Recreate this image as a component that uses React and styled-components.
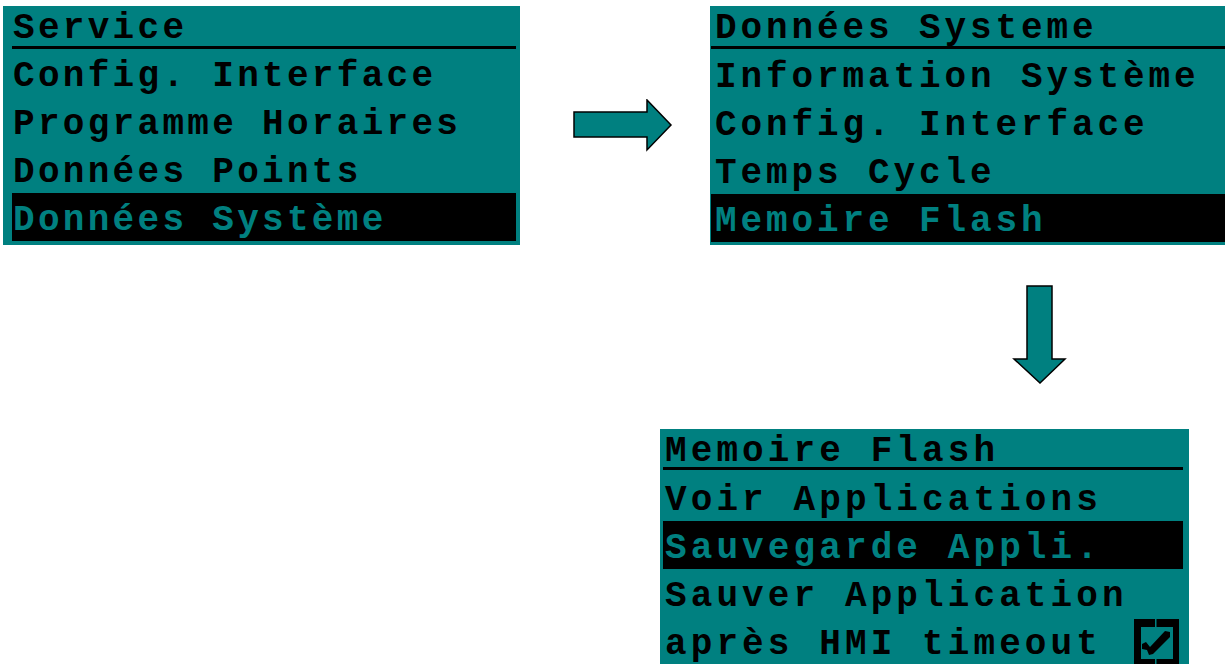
import React from 'react';
import styled, { createGlobalStyle } from 'styled-components';

const TEAL = '#008080';

const GlobalStyle = createGlobalStyle`
  html, body {
    margin: 0;
    padding: 0;
    background: #ffffff;
    overflow: hidden;
  }
`

const Canvas = styled.div`
  width: 1225px;
  height: 664px;
  display: flex;
  flex-direction: column;
  overflow: hidden;
`

const TopRow = styled.div`
  display: flex;
  flex-direction: row;
  align-items: center;
  margin-top: 6px;
  padding-left: 3px;
  & > * {
    flex-shrink: 0;
  }
`

const ArrowRightSvg = styled.svg`
  margin-left: 53px;
  margin-right: 37px;
`

const DownRow = styled.div`
  display: flex;
  padding-left: 1012px;
  margin-top: 40px;
`

const BottomRow = styled.div`
  display: flex;
  padding-left: 660px;
  margin-top: 44px;
  & > * {
    flex-shrink: 0;
  }
`

const Panel = styled.div`
  width: ${p => p.$w}px;
  height: ${p => p.$h}px;
  box-sizing: border-box;
  background: ${TEAL};
  padding: 0 ${p => p.$pr}px 0 ${p => p.$pl}px;
  display: flex;
  flex-direction: column;
  font-family: "Liberation Mono", "DejaVu Sans Mono", monospace;
  font-weight: bold;
  font-size: 36px;
  letter-spacing: ${p => p.$ls}px;
  color: #000;
  white-space: pre;
`

const Header = styled.div`
  height: ${p => p.$h}px;
  box-sizing: border-box;
  padding-top: 3.5px;
  padding-left: ${p => p.$ti}px;
  line-height: 37px;
  border-bottom: 3px solid #000;
  overflow: hidden;
`

const Item = styled.div`
  height: 48px;
  box-sizing: border-box;
  padding-top: 7px;
  padding-left: ${p => p.$ti}px;
  line-height: 41px;
  display: flex;
  justify-content: space-between;
  align-items: flex-start;
  background: ${p => (p.$selected ? '#000' : 'transparent')};
  color: ${p => (p.$selected ? TEAL : '#000')};
`

const Gap = styled.div`
  height: ${p => p.$h}px;
  flex-shrink: 0;
`

const CheckSvg = styled.svg`
  margin-top: -5px;
  margin-right: 4px;
  flex-shrink: 0;
`

function ArrowRight() {
  return (
    <ArrowRightSvg width="100" height="54" viewBox="0 0 100 54">
      <path d="M1 13H74V1L98 26L74 51V38H1Z" fill={TEAL} stroke="#000" strokeWidth="1.5" strokeLinejoin="miter" />
    </ArrowRightSvg>
  );
}

function ArrowDown() {
  return (
    <svg width="56" height="100" viewBox="0 0 56 100">
      <path d="M15 1H40V74H53L28 98L2 74H15Z" fill={TEAL} stroke="#000" strokeWidth="1.5" />
    </svg>
  );
}

// pixel-ish check inside a split black frame
function CheckBox() {
  return (
    <CheckSvg width="45" height="45" viewBox="0 0 45 45">
      <rect x="0" y="0" width="45" height="45" fill="#000" />
      <rect x="7" y="8" width="32" height="32" fill={TEAL} />
      <rect x="21" y="0" width="1.5" height="45" fill={TEAL} />
      <path d="M8 25L12 23L16 28L31 12L36 13V18L19 35L15 36L13 31L8 30Z" fill="#000" />
    </CheckSvg>
  );
}

function Menu({ title, items, selected, w, h, pl, pr, ti, ls, headerH, gap, children }) {
  return (
    <Panel $w={w} $h={h} $pl={pl} $pr={pr} $ls={ls}>
      <Header $h={headerH} $ti={ti}>{title}</Header>
      <Gap $h={gap} />
      {items.map((label, i) => (
        <Item key={label} $ti={ti} $selected={i === selected}>
          <span>{label}</span>
          {i === items.length - 1 && children}
        </Item>
      ))}
    </Panel>
  );
}

export default function App() {
  return (
    <>
      <GlobalStyle />
      <Canvas>
        <TopRow>
          <Menu
            title="Service"
            items={['Config. Interface', 'Programme Horaires', 'Données Points', 'Données Système']}
            selected={3}
            w={517} h={239} pl={9} pr={4} ti={1} ls={3.3} headerH={43} gap={0}
          />
          <ArrowRight />
          <Menu
            title="Données Systeme"
            items={['Information Système', 'Config. Interface', 'Temps Cycle', 'Memoire Flash']}
            selected={3}
            w={517} h={239} pl={1} pr={0} ti={4} ls={3.9} headerH={43} gap={1}
          />
        </TopRow>
        <DownRow>
          <ArrowDown />
        </DownRow>
        <BottomRow>
          <Menu
            title="Memoire Flash"
            items={['Voir Applications', 'Sauvegarde Appli.', 'Sauver Application', 'après HMI timeout']}
            selected={1}
            w={529} h={240} pl={3} pr={6} ti={2} ls={4.1} headerH={41} gap={3}
          >
            <CheckBox />
          </Menu>
        </BottomRow>
      </Canvas>
    </>
  );
}
